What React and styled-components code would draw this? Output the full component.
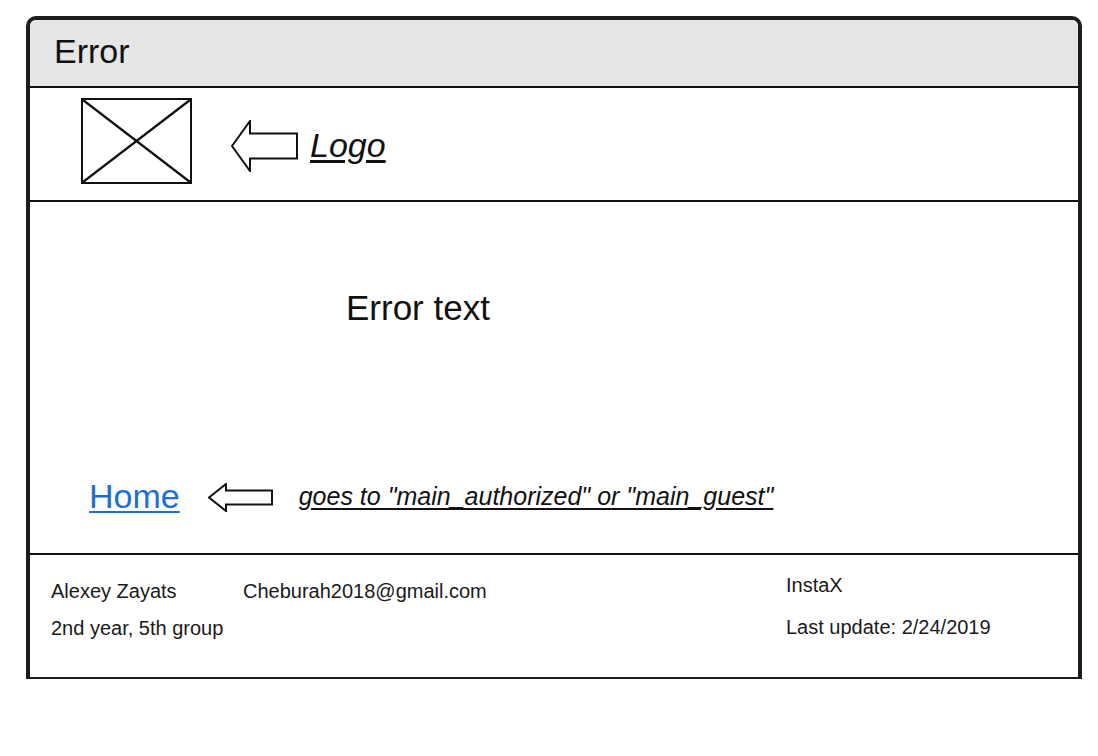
import React from 'react';
import styled, { createGlobalStyle } from 'styled-components';

const GlobalStyle = createGlobalStyle`
  html, body {
    margin: 0;
    padding: 0;
    background: #fff;
  }
  body {
    font-family: "Liberation Sans", Arial, sans-serif;
    color: #111;
  }
`

const Page = styled.div`
  padding: 16px 0 0 26px;
`

const Window = styled.div`
  width: 1056px;
  box-sizing: border-box;
  border-style: solid;
  border-color: #1c1c1c;
  border-width: 4px 4px 2px 4px;
  border-radius: 10px 10px 0 0;
`

const TitleBar = styled.div`
  height: 62px;
  box-sizing: content-box;
  background: #e6e6e6;
  border-bottom: 2px solid #111;
  border-radius: 6px 6px 0 0;
  display: flex;
  align-items: center;
  padding: 0 0 4px 24px;
  font-size: 34px;
`

const LogoBar = styled.div`
  border-bottom: 2px solid #111;
  display: flex;
  align-items: flex-start;
  padding: 10px 0 0 51px;
  box-sizing: content-box;
  height: 102px;
`

const Placeholder = styled.div`
  width: 111px;
  height: 86px;
  box-sizing: border-box;
  border: 2px solid #111;

  & svg {
    display: block;
  }
`

const Arrow = styled.svg`
  display: block;
  flex: none;
  margin-left: ${p => p.$gap}px;
  margin-top: ${p => p.$top || 0}px;
`

const Note = styled.span`
  font-style: italic;
  text-decoration: underline;
  text-underline-offset: 3px;
  font-size: ${p => p.$size}px;
  margin-left: ${p => p.$gap}px;
  margin-top: ${p => p.$top || 0}px;
  line-height: 1.15;
`

const Content = styled.div`
  height: 353px;
  border-bottom: 2px solid #111;
  display: flex;
  flex-direction: column;
  padding: 86px 0 0 316px;
  box-sizing: border-box;
`

const ErrorText = styled.div`
  font-size: 35px;
  line-height: 40px;
`

const HomeRow = styled.div`
  display: flex;
  align-items: center;
  margin: 148px 0 0 -257px;
  height: 40px;
`

const HomeLink = styled.a`
  font-size: 34px;
  line-height: 40px;
  color: #1f6fd1;
  text-decoration: underline;
  text-underline-offset: 3px;
  text-decoration-thickness: 2px;
`

const Footer = styled.div`
  height: 122px;
  display: flex;
  font-size: 20px;
  line-height: 22px;
  color: #1a1a1a;
`

const FooterCol = styled.div`
  display: flex;
  flex-direction: column;
  gap: ${p => p.$gap || 0}px;
  width: ${p => p.$width ? p.$width + 'px' : 'auto'};
  padding-top: ${p => p.$top}px;
  padding-left: ${p => p.$left || 0}px;
`

const LeftArrow = ({ w, h, shaft, head, gap, top }) => {
  const mid = h / 2;
  const pts = [
    [1, mid],
    [head, 1],
    [head, mid - shaft / 2],
    [w - 1, mid - shaft / 2],
    [w - 1, mid + shaft / 2],
    [head, mid + shaft / 2],
    [head, h - 1],
  ].map(p => p.join(',')).join(' ');
  return (
    <Arrow width={w} height={h} viewBox={`0 0 ${w} ${h}`} $gap={gap} $top={top}>
      <polygon points={pts} fill="#fff" stroke="#111" strokeWidth="2" />
    </Arrow>
  );
};

const App = () => {
  return (
    <>
      <GlobalStyle />
      <Page>
        <Window>
          <TitleBar>Error</TitleBar>
          <LogoBar>
            <Placeholder>
              <svg width="107" height="82" viewBox="0 0 107 82">
                <line x1="0" y1="0" x2="107" y2="82" stroke="#111" strokeWidth="2.4" />
                <line x1="107" y1="0" x2="0" y2="82" stroke="#111" strokeWidth="2.4" />
              </svg>
            </Placeholder>
            <LeftArrow w={67} h={52} shaft={25} head={19} gap={39} top={22} />
            <Note $size={34} $gap={12} $top={28}>Logo</Note>
          </LogoBar>
          <Content>
            <ErrorText>Error text</ErrorText>
            <HomeRow>
              <HomeLink href="#">Home</HomeLink>
              <LeftArrow w={65} h={29} shaft={14} head={18} gap={28} top={2} />
              <Note $size={25} $gap={26}>goes to "main_authorized" or "main_guest"</Note>
            </HomeRow>
          </Content>
          <Footer>
            <FooterCol $width={192} $left={21} $top={25} $gap={15}>
              <span>Alexey Zayats</span>
              <span>2nd year, 5th group</span>
            </FooterCol>
            <FooterCol $width={543} $top={25}>
              <span>Cheburah2018@gmail.com</span>
            </FooterCol>
            <FooterCol $top={19} $gap={20}>
              <span>InstaX</span>
              <span>Last update: 2/24/2019</span>
            </FooterCol>
          </Footer>
        </Window>
      </Page>
    </>
  );
};

export default App;
